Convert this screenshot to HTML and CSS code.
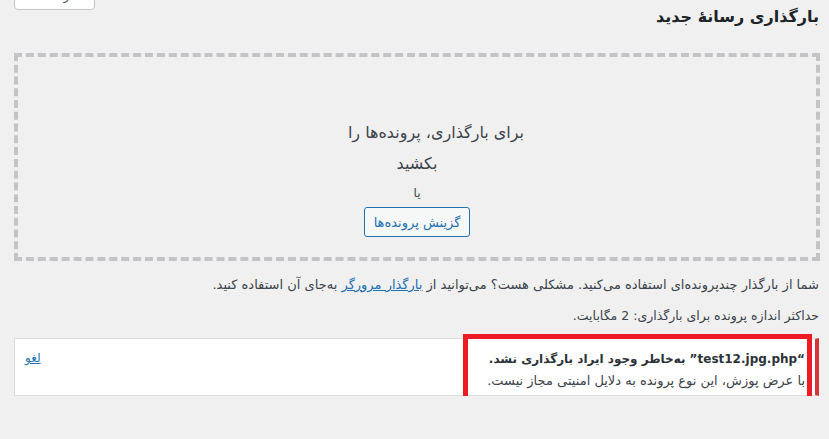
FILE: index.html
```html
<!DOCTYPE html>
<html dir="rtl" lang="fa">
<head>
<meta charset="utf-8">
<title>بارگذاری رسانهٔ جدید</title>
<link rel="stylesheet" href="styles.css">
</head>
<body>
<div class="wrap">
  <header class="page-head">
    <h1 class="page-title">بارگذاری رسانهٔ جدید</h1>
    <button class="help-tab" type="button">راهنما</button>
  </header>

  <section class="drop-area">
    <div class="drop-inside">
      <p class="drop-info"><span class="line first">برای بارگذاری، پرونده‌ها را </span><span class="line">بکشید</span></p>
      <p class="drop-or">یا</p>
      <button class="select-btn" type="button">گزینش پرونده‌ها</button>
    </div>
  </section>

  <p class="note">شما از بارگذار چندپرونده‌ای استفاده می‌کنید. مشکلی هست؟ می‌توانید از <a href="#">بارگذار مرورگر</a> به‌جای آن استفاده کنید.</p>
  <p class="note max">حداکثر اندازه پرونده برای بارگذاری: 2 مگابایت.</p>

  <div class="media-item">
    <div class="error-div">
      <a class="dismiss" href="#">لغو</a>
      <div class="error-text">
        <strong>“test12.jpg.php” به‌خاطر وجود ایراد بارگذاری نشد.</strong>
        <span class="error-msg">با عرض پوزش، این نوع پرونده به دلایل امنیتی مجاز نیست.</span>
      </div>
    </div>
    <div class="highlight"></div>
  </div>
</div>
</body>
</html>
```
FILE: styles.css
```css
html, body {
  margin: 0;
  padding: 0;
  background: #f0f0f1;
}
body {
  font-family: "DejaVu Sans", "Noto Sans", sans-serif;
  font-size: 13px;
  color: #3c434a;
  overflow: hidden;
}
.wrap {
  padding: 0 9px 0 14px;
}
.page-head {
  display: flex;
  justify-content: space-between;
  align-items: flex-start;
  height: 53px;
}
.page-title {
  margin: 5px 1px 0 0;
  font-size: 16px;
  font-weight: bold;
  line-height: 24px;
  color: #1d2327;
}
.help-tab {
  margin-top: -18px;
  width: 81px;
  height: 28px;
  border: 1px solid #c3c4c7;
  border-radius: 4px;
  background: #fff;
  color: #646970;
  font-family: inherit;
  font-size: 12px;
  padding: 0;
}
.drop-area {
  height: 208px;
  box-sizing: border-box;
  border: 4px dashed #c3c4c7;
  display: flex;
  justify-content: center;
}
.drop-inside {
  width: 240px;
  padding-top: 60px;
  display: flex;
  flex-direction: column;
  align-items: center;
  text-align: center;
}
.drop-info {
  margin: 0;
  width: 100%;
  font-size: 16px;
  line-height: 31px;
  color: #3c434a;
}
.line {
  display: block;
}
.line.first {
  padding-left: 38px;
}
.drop-or {
  margin: 0;
  font-size: 12px;
  line-height: 28px;
}
.select-btn {
  flex: none;
  height: 30px;
  padding: 0 9px;
  border: 1px solid #2271b1;
  border-radius: 3px;
  background: #f6f7f7;
  color: #2271b1;
  font-family: inherit;
  font-size: 13px;
}
.note {
  margin: 15px 1px 0 0;
  line-height: 18px;
}
.note.max {
  margin-top: 13px;
  font-size: 12.5px;
}
.note a {
  color: #2271b1;
}
.media-item {
  position: relative;
  margin: 13px 1px 0 0;
}
.error-div {
  background: #fff;
  border: 1px solid #dcdcde;
  border-right: 4px solid #d63638;
  height: 58px;
  box-sizing: border-box;
  display: flex;
  flex-direction: row-reverse;
  justify-content: space-between;
  padding: 10px 10px 0 10px;
}
.dismiss {
  color: #2271b1;
  font-size: 12px;
  margin-top: 2px;
}
.error-text {
  display: flex;
  flex-direction: column;
  line-height: 21px;
}
.error-text strong {
  font-size: 12px;
  color: #2c3338;
}
.error-msg {
  font-size: 13px;
}
.highlight {
  position: absolute;
  top: -4px;
  right: 7px;
  width: 349px;
  height: 68px;
  box-sizing: border-box;
  border: 5px solid #ed1c24;
}
```
